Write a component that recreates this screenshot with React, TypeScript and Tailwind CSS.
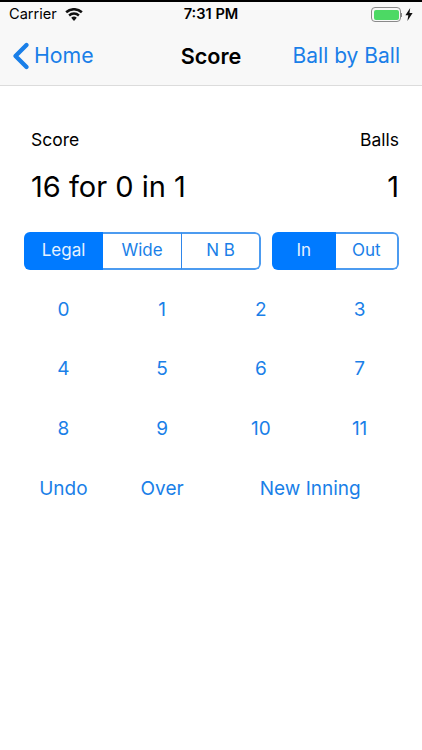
import { ChevronLeft } from 'lucide-react';

const keys = ['0', '1', '2', '3', '4', '5', '6', '7', '8', '9', '10', '11'];

const Segment = ({ labels, active, className }: { labels: string[]; active: string; className: string }) => (
  <div className={`grid h-[38px] auto-cols-fr grid-flow-col overflow-hidden rounded-[6px] ${className}`}>
    {labels.map((label, i) => (
      <div
        key={label}
        className={`flex items-center justify-center text-[17px] ${
          label === active
            ? 'bg-[#007aff] text-[#e6f2ff]'
            : `border-y-2 border-[#4c9bf0] bg-white text-[#1a7fe8] ${
                i === labels.length - 1 ? 'rounded-r-[6px] border-r-2' : 'border-r border-r-[#2f86ea]'
              }`
        }`}
      >
        {label}
      </div>
    ))}
  </div>
);

export default function App() {
  return (
    <div className="h-[750px] w-[422px] overflow-hidden bg-white font-['Inter',sans-serif] text-black">
      {/* Header */}
      <div className="h-[86px] border-t-2 border-b border-t-black border-b-[#dcdcdc] bg-[#f8f8f8]">
        <div className="relative flex h-[25px] items-center justify-between pl-[9px] pr-[9px]">
          <div className="flex items-center gap-[8px]">
            <span className="text-[14.6px]">Carrier</span>
            <svg width="18" height="13" viewBox="0 0 18 13" fill="#111">
              <path d="M9 13 6.2 9.8a4.2 4.2 0 0 1 5.6 0z" />
              <path d="M4.9 8.4 3.3 6.6a8.4 8.4 0 0 1 11.4 0l-1.6 1.8a6 6 0 0 0-8.2 0z" />
              <path d="M2 5.2.3 3.3a13 13 0 0 1 17.4 0L16 5.2a10.4 10.4 0 0 0-14 0z" />
            </svg>
          </div>
          <span className="absolute left-0 right-0 text-center text-[14.6px] font-semibold">7:31 PM</span>
          <div className="flex items-center gap-[3px]">
            <div className="flex items-center">
              <div className="h-[15px] w-[30px] rounded-[4px] border border-[#8a8a8a] p-[1.5px]">
                <div className="h-full w-full rounded-[2px] bg-[#4cd964]" />
              </div>
              <div className="h-[4px] w-[1px] bg-[#8a8a8a]" />
            </div>
            <svg width="8" height="13" viewBox="0 0 8 13" fill="#111">
              <path d="M5.2 0 .4 7.3h2.9L2.4 13l5.2-8H4.5z" />
            </svg>
          </div>
        </div>
        <div className="relative flex h-[58px] items-center justify-between pr-[22px]">
          <div className="flex items-center text-[#1a7fe8]">
            <ChevronLeft size={44} strokeWidth={2.4} className="-ml-[1px] -mr-[9px]" />
            <span className="text-[21.3px]">Home</span>
          </div>
          <span className="absolute left-0 right-0 text-center text-[21.6px] font-semibold">Score</span>
          <span className="text-[21px] text-[#1a7fe8]">Ball by Ball</span>
        </div>
      </div>

      {/* Score */}
      <div className="pl-[24px] pr-[23px] pt-[43px]">
        <div className="flex justify-between pl-[7px] text-[17.5px] leading-[22px]">
          <span>Score</span>
          <span>Balls</span>
        </div>
        <div className="mt-[18px] flex justify-between pl-[7px] text-[29px] leading-[36px]">
          <span>16 for 0 in 1</span>
          <span>1</span>
        </div>
        <div className="mt-[27px] flex gap-[11px]">
          <Segment labels={['Legal', 'Wide', 'N B']} active="Legal" className="w-[237px]" />
          <Segment labels={['In', 'Out']} active="In" className="w-[127px]" />
        </div>
      </div>

      {/* Keypad */}
      <div className="mt-[10px] grid grid-cols-4 pl-[14px] pr-[13px] text-[19px] text-[#1a7fe8]">
        {keys.map(k => (
          <div key={k} className="flex h-[59.8px] items-center justify-center">
            {k}
          </div>
        ))}
        <div className="flex h-[59.8px] items-center justify-center">Undo</div>
        <div className="flex h-[59.8px] items-center justify-center">Over</div>
        <div className="col-span-2 flex h-[59.8px] items-center justify-center">New Inning</div>
      </div>
    </div>
  );
}
